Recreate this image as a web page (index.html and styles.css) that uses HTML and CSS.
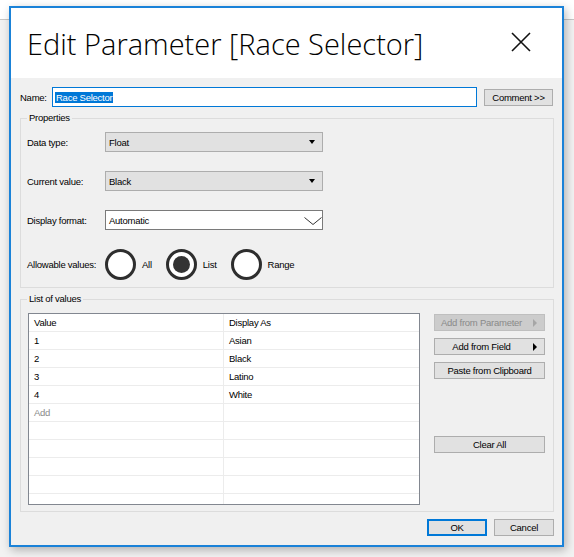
FILE: index.html
```html
<!DOCTYPE html>
<html>
<head>
<meta charset="utf-8">
<link rel="stylesheet" href="styles.css">
</head>
<body>
<div class="dialog">
  <div class="titlebar">
    <h1 class="title">Edit Parameter [Race Selector]</h1>
    <svg class="close" width="20" height="20" viewBox="0 0 20 20"><path d="M1 1 L19 19 M19 1 L1 19" stroke="#111" stroke-width="1.6" fill="none"/></svg>
  </div>
  <div class="content">
    <div class="name-row">
      <span class="name-label">Name:</span>
      <div class="name-input"><span class="sel">Race Selector</span></div>
      <div class="btn comment">Comment &gt;&gt;</div>
    </div>

    <div class="group props">
      <span class="group-label">Properties</span>
      <div class="props-grid">
        <span class="lbl">Data type:</span>
        <div class="combo"><span>Float</span><i class="caret"></i></div>
        <span class="lbl">Current value:</span>
        <div class="combo"><span>Black</span><i class="caret"></i></div>
        <span class="lbl">Display format:</span>
        <div class="combo white"><span>Automatic</span><svg class="chev" width="18" height="8" viewBox="0 0 18 8"><path d="M0.5 0.5 L9 7.5 L17.5 0.5" stroke="#333" stroke-width="1" fill="none"/></svg></div>
        <span class="lbl">Allowable values:</span>
        <div class="radios">
          <div class="radio"><span class="circle"></span><span>All</span></div>
          <div class="radio"><span class="circle on"></span><span>List</span></div>
          <div class="radio"><span class="circle"></span><span>Range</span></div>
        </div>
      </div>
    </div>

    <div class="group list">
      <span class="group-label">List of values</span>
      <div class="list-body">
        <div class="table">
          <div class="row"><div class="cell">Value</div><div class="cell">Display As</div></div>
          <div class="row"><div class="cell">1</div><div class="cell">Asian</div></div>
          <div class="row"><div class="cell">2</div><div class="cell">Black</div></div>
          <div class="row"><div class="cell">3</div><div class="cell">Latino</div></div>
          <div class="row"><div class="cell">4</div><div class="cell">White</div></div>
          <div class="row"><div class="cell add">Add</div><div class="cell"></div></div>
          <div class="row"><div class="cell"></div><div class="cell"></div></div>
          <div class="row"><div class="cell"></div><div class="cell"></div></div>
          <div class="row"><div class="cell"></div><div class="cell"></div></div>
          <div class="row"><div class="cell"></div><div class="cell"></div></div>
          <div class="row"><div class="cell"></div><div class="cell"></div></div>
        </div>
        <div class="side">
          <div class="btn side-btn disabled"><span class="btn-text">Add from Parameter</span><i class="arrow"></i></div>
          <div class="btn side-btn"><span class="btn-text">Add from Field</span><i class="arrow"></i></div>
          <div class="btn side-btn">Paste from Clipboard</div>
          <div class="btn side-btn clear">Clear All</div>
        </div>
      </div>
    </div>

    <div class="footer">
      <div class="btn footer-btn ok">OK</div>
      <div class="btn footer-btn">Cancel</div>
    </div>
  </div>
</div>
</body>
</html>
```

FILE: styles.css
```css
html, body {
  margin: 0;
  padding: 0;
}

body {
  width: 574px;
  height: 557px;
  overflow: hidden;
  background: linear-gradient(to bottom, #ffffff 0, #ffffff 19px, #c6c6c6 19px, #c6c6c6 20px, #f2f2f2 20px);
  font-family: "Liberation Sans", Arial, sans-serif;
  font-size: 9.5px;
  letter-spacing: -0.25px;
  color: #000;
}

.dialog {
  margin: 6px 0 0 9px;
  width: 555px;
  height: 541px;
  box-sizing: border-box;
  border: 2px solid #1a82d8;
  background: #f0f0f0;
  box-shadow: 2px 3px 9px rgba(0, 0, 0, 0.28);
  display: flex;
  flex-direction: column;
}

.titlebar {
  height: 70px;
  flex: none;
  background: #fff;
  display: flex;
  align-items: center;
  padding: 0 31px 0 16px;
}

.title {
  flex: 1;
  margin: 0;
  font-family: "Open Sans", "Liberation Sans", sans-serif;
  font-weight: 300;
  font-size: 29px;
  letter-spacing: 0;
  color: #000;
}

.close {
  flex: none;
  margin-top: -2px;
}

.content {
  flex: 1;
  padding: 9px 8px 9px 9px;
  display: flex;
  flex-direction: column;
}

.name-row {
  display: flex;
  align-items: center;
  height: 20px;
}

.name-label {
  width: 32px;
}

.name-input {
  width: 425px;
  height: 20px;
  box-sizing: border-box;
  border: 1px solid #0078d7;
  background: #fff;
  padding-left: 2px;
  display: flex;
  align-items: center;
}

.sel {
  background: #0078d7;
  color: #fff;
  padding: 0 1px;
  line-height: 11px;
}

.btn {
  box-sizing: border-box;
  height: 17px;
  border: 1px solid #adadad;
  background: #e1e1e1;
  display: flex;
  align-items: center;
  justify-content: center;
  white-space: nowrap;
}

.comment {
  width: 69px;
  margin-left: 7px;
}

.group {
  position: relative;
  border: 1px solid #dcdcdc;
  margin-top: 11px;
}

.group-label {
  position: absolute;
  top: -7px;
  left: 6px;
  padding: 0 2px;
  background: #f0f0f0;
  line-height: 12px;
}

.props-grid {
  display: grid;
  grid-template-columns: 78px 218px;
  grid-template-rows: 20px 20px 20px 31px;
  row-gap: 19px;
  align-items: center;
  padding: 13px 0 7px 6px;
}

.combo {
  height: 20px;
  box-sizing: border-box;
  border: 1px solid #adadad;
  background: #e1e1e1;
  display: flex;
  align-items: center;
  justify-content: space-between;
  padding: 0 7px 0 3px;
}

.combo.white {
  background: #fff;
  border-color: #7a7a7a;
  padding-right: 0;
}

.caret {
  width: 0;
  height: 0;
  border-left: 3px solid transparent;
  border-right: 3px solid transparent;
  border-top: 4px solid #000;
}

.chev {
  margin-top: 2px;
}

.radios {
  display: flex;
  align-items: center;
  gap: 14px;
}

.radio {
  display: flex;
  align-items: center;
  gap: 6px;
}

.circle {
  width: 31px;
  height: 31px;
  box-sizing: border-box;
  border: 3px solid #2e2e2e;
  border-radius: 50%;
  background: #fff;
  display: flex;
  align-items: center;
  justify-content: center;
}

.circle.on::after {
  content: "";
  width: 17px;
  height: 17px;
  border-radius: 50%;
  background: #333;
}

.list-body {
  display: flex;
  padding: 13px 0 6px 7px;
}

.table {
  width: 392px;
  height: 192px;
  box-sizing: border-box;
  border: 1px solid #828790;
  background: #fff;
  overflow: hidden;
}

.row {
  display: flex;
  height: 18px;
  box-sizing: border-box;
  border-bottom: 1px solid #ececec;
}

.cell {
  width: 195px;
  box-sizing: border-box;
  padding-left: 5px;
  line-height: 17px;
}

.cell:first-child {
  border-right: 1px solid #ececec;
}

.cell.add {
  color: #8a8a8a;
}

.side {
  margin-left: 14px;
  padding-top: 1px;
  width: 111px;
  display: flex;
  flex-direction: column;
  gap: 7px;
}

.side-btn {
  width: 111px;
}

.btn-text {
  flex: 1;
  text-align: center;
  margin-right: 5px;
}

.arrow {
  width: 0;
  height: 0;
  border-top: 4px solid transparent;
  border-bottom: 4px solid transparent;
  border-left: 4px solid #000;
  margin-right: 7px;
}

.disabled {
  background: #cccccc;
  border-color: #bfbfbf;
  color: #8a8a8a;
}

.disabled .arrow {
  border-left-color: #a6a6a6;
}

.clear {
  margin-top: 50px;
}

.footer {
  margin-top: 7px;
  display: flex;
  justify-content: flex-end;
  gap: 7px;
}

.footer-btn {
  width: 60px;
}

.ok {
  border: 2px solid #0078d7;
}
```
